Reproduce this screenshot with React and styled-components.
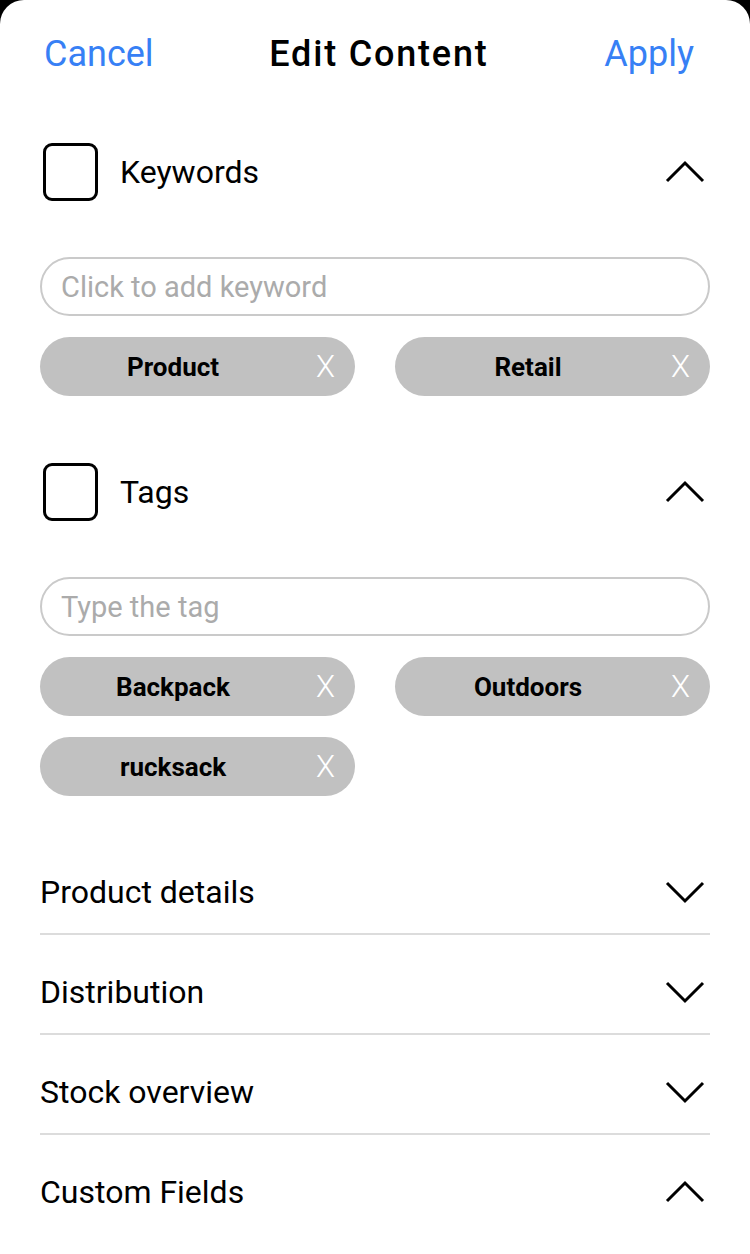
import React from "react";
import styled, { createGlobalStyle } from "styled-components";

const GlobalStyle = createGlobalStyle`
  html, body {
    margin: 0;
    padding: 0;
    background: #000;
  }
  body {
    font-family: Roboto, "Liberation Sans", sans-serif;
  }
`;

const Sheet = styled.div`
  background: #fff;
  border-radius: 24px 24px 0 0;
  min-height: 1254px;
  box-sizing: border-box;
  overflow: hidden;
`;

const Header = styled.div`
  height: 108px;
  display: flex;
  align-items: center;
  justify-content: space-between;
  padding: 0 56px 0 44px;
`;

const HeaderButton = styled.button`
  background: none;
  border: none;
  padding: 0;
  font-family: inherit;
  font-size: 36px;
  color: #3780f5;
  cursor: pointer;
`;

const Title = styled.h1`
  margin: 0;
  font-size: 36px;
  font-weight: 500;
  letter-spacing: 1.8px;
  color: #000;
`;

const Body = styled.div`
  padding: 35px 40px 0;
`;

const Section = styled.div`
  padding-bottom: ${({ $last }) => ($last ? "39px" : "67px")};
`;

const SectionHead = styled.div`
  display: flex;
  align-items: center;
  height: 58px;
`;

const CheckBox = styled.div`
  width: 55px;
  height: 58px;
  box-sizing: border-box;
  border: 3px solid #000;
  border-radius: 9px;
  margin-left: 3px;
  flex-shrink: 0;
`;

const SectionLabel = styled.span`
  flex: 1;
  margin-left: 22px;
  font-size: 32px;
  color: #000;
`;

const ChevronBox = styled.span`
  width: 44px;
  display: flex;
  justify-content: center;
  margin-right: 3px;
`;

const Input = styled.input`
  display: block;
  width: 100%;
  height: 59px;
  box-sizing: border-box;
  margin-top: 56px;
  border: 2px solid #cacaca;
  border-radius: 30px;
  padding: 0 19px;
  font-family: inherit;
  font-size: 29px;
  outline: none;
  &::placeholder {
    color: #ababab;
  }
`;

const ChipGrid = styled.div`
  display: grid;
  grid-template-columns: 1fr 1fr;
  column-gap: 40px;
  row-gap: 21px;
  margin-top: 21px;
`;

const Chip = styled.div`
  height: 59px;
  border-radius: 30px;
  background: #c1c1c1;
  display: flex;
  align-items: center;
  padding-right: 20px;
`;

const ChipLabel = styled.span`
  flex: 1;
  text-align: center;
  font-size: 26px;
  font-weight: 700;
  color: #000;
`;

const ChipClose = styled.span`
  margin-left: 10px;
  font-size: 31px;
  font-weight: 300;
  color: #fff;
  line-height: 1;
`;

const ListItem = styled.div`
  display: flex;
  align-items: center;
  padding: 36px 0 20px;
  height: 42px;
  border-bottom: ${({ $last }) => ($last ? "none" : "2px solid #dcdcdc")};
`;

const ListLabel = styled.span`
  flex: 1;
  font-size: 32px;
  color: #000;
`;

const Chevron = ({ up }) => (
  <svg width="40" height="24" viewBox="0 0 40 24">
    <polyline
      points={up ? "2,21 20,3 38,21" : "2,3 20,21 38,3"}
      fill="none"
      stroke="#000"
      strokeWidth="3"
    />
  </svg>
);

const TagSection = ({ label, placeholder, chips, last }) => (
  <Section $last={last}>
    <SectionHead>
      <CheckBox />
      <SectionLabel>{label}</SectionLabel>
      <ChevronBox>
        <Chevron up />
      </ChevronBox>
    </SectionHead>
    <Input placeholder={placeholder} />
    <ChipGrid>
      {chips.map((c) => (
        <Chip key={c}>
          <ChipLabel>{c}</ChipLabel>
          <ChipClose>X</ChipClose>
        </Chip>
      ))}
    </ChipGrid>
  </Section>
);

const listItems = [
  { label: "Product details", up: false },
  { label: "Distribution", up: false },
  { label: "Stock overview", up: false },
  { label: "Custom Fields", up: true },
];

export default function App() {
  return (
    <>
      <GlobalStyle />
      <Sheet>
        <Header>
          <HeaderButton>Cancel</HeaderButton>
          <Title>Edit Content</Title>
          <HeaderButton>Apply</HeaderButton>
        </Header>
        <Body>
          <TagSection
            label="Keywords"
            placeholder="Click to add keyword"
            chips={["Product", "Retail"]}
          />
          <TagSection
            label="Tags"
            placeholder="Type the tag"
            chips={["Backpack", "Outdoors", "rucksack"]}
            last
          />
          {listItems.map((item, i) => (
            <ListItem key={item.label} $last={i === listItems.length - 1}>
              <ListLabel>{item.label}</ListLabel>
              <ChevronBox>
                <Chevron up={item.up} />
              </ChevronBox>
            </ListItem>
          ))}
        </Body>
      </Sheet>
    </>
  );
}
